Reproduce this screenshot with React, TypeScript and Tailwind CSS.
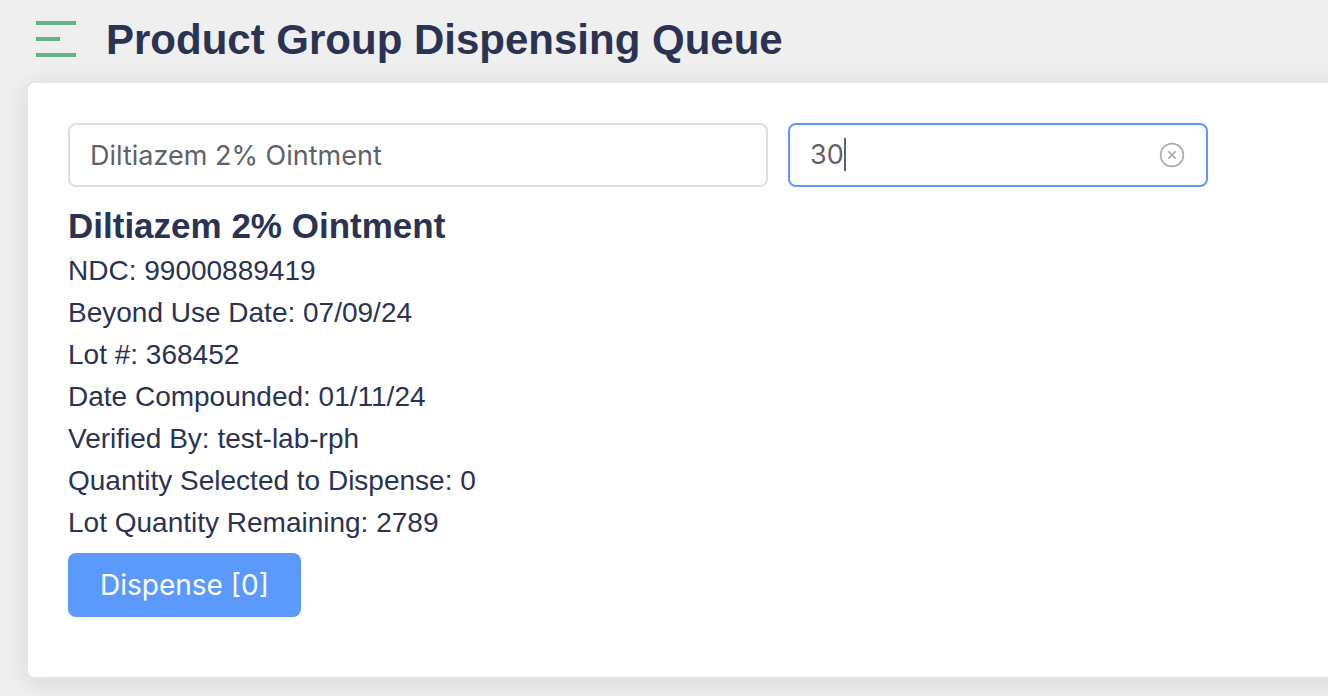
import { useState } from "react";

const details: [string, string][] = [
  ["NDC", "99000889419"],
  ["Beyond Use Date", "07/09/24"],
  ["Lot #", "368452"],
  ["Date Compounded", "01/11/24"],
  ["Verified By", "test-lab-rph"],
  ["Quantity Selected to Dispense", "0"],
  ["Lot Quantity Remaining", "2789"],
];

function MenuIcon() {
  return (
    <svg className="block h-9 w-10" viewBox="0 0 40 36" fill="#62b582" shapeRendering="crispEdges" aria-hidden="true">
      <rect width="40" height="4" />
      <rect y="16" width="24" height="4" />
      <rect y="32" width="40" height="4" />
    </svg>
  );
}

function ClearIcon() {
  return (
    <svg className="block size-7" viewBox="0 0 28 28" fill="none" stroke="#a8abb2" strokeWidth="1.6" aria-hidden="true">
      <circle cx="14" cy="14" r="11.4" />
      <path d="M10.4 10.4l7.2 7.2M17.6 10.4l-7.2 7.2" />
    </svg>
  );
}

export default function App() {
  const [product, setProduct] = useState("Diltiazem 2% Ointment");
  const [quantity, setQuantity] = useState("30");

  return (
    <div className="min-h-screen overflow-hidden bg-[#efefef] pb-4 font-['Liberation_Sans',Arial,sans-serif] text-[#2a3352]">
      <header className="flex h-[81px] items-start gap-[30px] pl-9">
        <button type="button" aria-label="Toggle menu" className="mt-[21px]">
          <MenuIcon />
        </button>
        <h1 className="mt-4 text-[42px] leading-[48px] font-bold">Product Group Dispensing Queue</h1>
      </header>

      <main className="-mr-8 ml-[26px] rounded-lg border-2 border-[#e4e5ec] bg-white px-10 pt-10 pb-[60px] shadow-[0_4px_24px_rgba(0,0,0,0.1)]">
        <div className="flex gap-5 font-['Inter',sans-serif] text-[27px] leading-[34px] text-[#606266]">
          <input
            type="text"
            aria-label="Product"
            value={product}
            onChange={(e) => setProduct(e.target.value)}
            className="h-16 w-[700px] rounded-lg border-2 border-[#dcdfe6] bg-white px-5 outline-none"
          />
          <div className="relative flex h-16 w-[420px] items-center rounded-lg border-2 border-[#5b9afc] bg-white px-5">
            <input
              type="text"
              aria-label="Quantity"
              value={quantity}
              onChange={(e) => setQuantity(e.target.value)}
              className="min-w-0 flex-1 self-stretch bg-transparent caret-transparent outline-none"
            />
            {quantity === "30" && <span className="absolute top-[13px] left-[54px] h-[33px] w-0.5 bg-[#606266]" />}
            <button type="button" aria-label="Clear quantity" onClick={() => setQuantity("")}>
              <ClearIcon />
            </button>
          </div>
        </div>

        <h2 className="mt-4 text-[35px] leading-[45px] font-bold">Diltiazem 2% Ointment</h2>
        <ul className="mt-0.5 text-[28px] leading-[42px]">
          {details.map(([name, value]) => (
            <li key={name}>
              {name}: {value}
            </li>
          ))}
        </ul>
        <button
          type="button"
          className="mt-[9px] h-16 rounded-lg bg-[#5b9afc] px-8 font-['Inter',sans-serif] text-[28px] text-white"
        >
          Dispense [0]
        </button>
      </main>
    </div>
  );
}
